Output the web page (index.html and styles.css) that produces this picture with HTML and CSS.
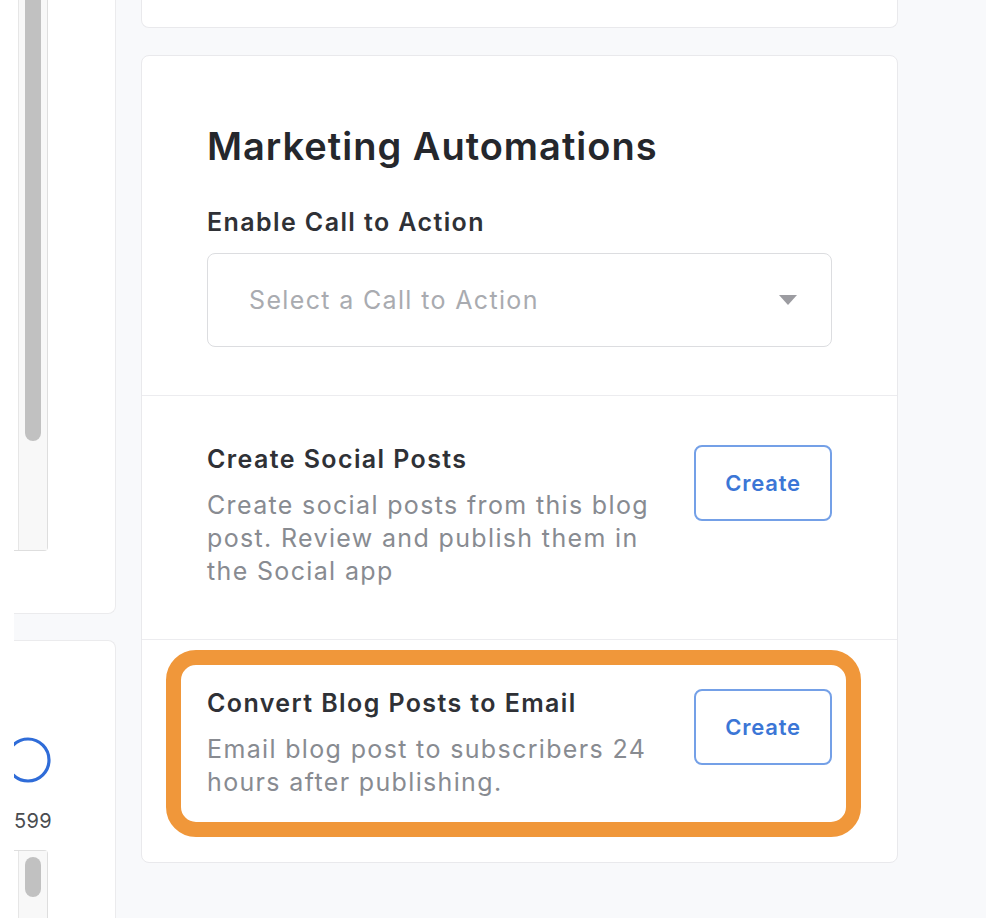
FILE: index.html
```html
<!DOCTYPE html>
<html lang="en">
<head>
<meta charset="utf-8">
<title>Marketing Automations</title>
<link rel="stylesheet" href="styles.css">
</head>
<body>
<div class="page">
  <div class="edge"></div>
  <aside class="left">
    <div class="lcard lcard-top">
      <div class="area area-top">
        <div class="area-text"></div>
        <div class="sb"><div class="thumb thumb-top"></div></div>
      </div>
    </div>
    <div class="lcard lcard-bottom">
      <svg class="ring" width="50" height="50" viewBox="0 0 50 50" aria-hidden="true">
        <circle cx="25" cy="25" r="21" fill="none" stroke="#2f6cd8" stroke-width="3.2"/>
      </svg>
      <div class="count">599</div>
      <div class="area area-bottom">
        <div class="area-text"></div>
        <div class="sb sb-bottom"><div class="thumb thumb-bottom"></div></div>
      </div>
    </div>
  </aside>
  <main class="right">
    <div class="card card-top"></div>
    <div class="card main">
      <section class="sec sec-cta">
        <h2 class="heading">Marketing Automations</h2>
        <div class="label">Enable Call to Action</div>
        <div class="select">
          <span class="placeholder">Select a Call to Action</span>
          <span class="caret"></span>
        </div>
      </section>
      <section class="sec sec-item sec-social">
        <div class="item-text">
          <div class="item-title">Create Social Posts</div>
          <div class="item-desc">Create social posts from this blog post. Review and publish them in the Social app</div>
        </div>
        <button class="btn">Create</button>
      </section>
      <section class="sec sec-item sec-email">
        <div class="item-text">
          <div class="item-title">Convert Blog Posts to Email</div>
          <div class="item-desc">Email blog post to subscribers 24 hours after publishing.</div>
        </div>
        <button class="btn">Create</button>
        <div class="highlight"></div>
      </section>
    </div>
  </main>
</div>
</body>
</html>
```

FILE: styles.css
```css
* { box-sizing: border-box; }

html, body {
  margin: 0;
  padding: 0;
  background: #f8f9fb;
}

body {
  font-family: Inter, "Noto Sans", "Liberation Sans", sans-serif;
  color: #2a2c31;
}

.page {
  display: flex;
  width: 986px;
  height: 918px;
  overflow: hidden;
  background: #f8f9fb;
}

.edge {
  width: 14px;
  flex: none;
  background: #ffffff;
}

/* left column */
.left {
  width: 102px;
  flex: none;
  display: flex;
  flex-direction: column;
  gap: 26px;
}

.lcard {
  background: #ffffff;
  border-right: 1px solid #ebebed;
  overflow: hidden;
}

.lcard-top {
  height: 614px;
  flex: none;
  border-bottom: 1px solid #ebebed;
  border-bottom-right-radius: 8px;
}

.lcard-bottom {
  flex: 1;
  border-top: 1px solid #ebebed;
  border-top-right-radius: 8px;
  display: flex;
  flex-direction: column;
}

.area {
  width: 34px;
  display: flex;
  background: #ffffff;
  border-right: 1px solid #dedede;
}

.area-top {
  height: 551px;
  border-bottom: 1px solid #dedede;
  border-bottom-right-radius: 4px;
}

.area-bottom {
  margin-top: 17px;
  flex: 1;
  border-top: 1px solid #dedede;
  border-top-right-radius: 4px;
}

.area-text {
  width: 4px;
  flex: none;
}

.sb {
  flex: 1;
  background: #f8f8f8;
  border-left: 1.5px solid #e6e6e6;
  padding: 0 5px 0 6px;
}

.thumb {
  width: 16px;
  background: #c1c1c1;
}

.thumb-top {
  height: 441px;
  border-radius: 0 0 8px 8px;
}

.sb-bottom {
  padding-top: 6px;
}

.thumb-bottom {
  height: 40px;
  border-radius: 8px;
}

.ring {
  display: block;
  margin-top: 94px;
  margin-left: -11px;
  flex: none;
}

.count {
  margin-top: 24px;
  font-size: 20px;
  line-height: 24px;
  letter-spacing: 0.3px;
  color: #4a4c50;
  white-space: nowrap;
}

/* right column */
.right {
  width: 757px;
  flex: none;
  margin-left: 25px;
  display: flex;
  flex-direction: column;
  gap: 27px;
}

.card {
  background: #ffffff;
  border: 1px solid #e9e9ec;
  border-radius: 8px;
}

.card-top {
  height: 28px;
  border-top: none;
  border-top-left-radius: 0;
  border-top-right-radius: 0;
}

.main {
  height: 808px;
  display: flex;
  flex-direction: column;
}

.sec {
  padding-left: 65px;
  padding-right: 65px;
}

.sec-cta {
  padding-top: 68px;
  padding-bottom: 48px;
}

.heading {
  margin: 0;
  font-size: 38px;
  line-height: 44px;
  font-weight: 600;
  letter-spacing: 1px;
  color: #25272c;
}

.label {
  margin-top: 39px;
  font-size: 25px;
  line-height: 30px;
  font-weight: 600;
  letter-spacing: 1.4px;
  color: #2f3136;
}

.select {
  margin-top: 16px;
  height: 94px;
  border: 1.5px solid #dcdde0;
  border-radius: 8px;
  display: flex;
  align-items: center;
  justify-content: space-between;
  padding: 0 34px 0 41px;
}

.placeholder {
  font-size: 25px;
  line-height: 30px;
  letter-spacing: 1.35px;
  color: #a9abb0;
}

.caret {
  width: 0;
  height: 0;
  border-left: 9.5px solid transparent;
  border-right: 9.5px solid transparent;
  border-top: 10px solid #9c9ca1;
}

.sec-item {
  border-top: 1px solid #ececef;
  display: flex;
  align-items: flex-start;
  gap: 30px;
  padding-top: 48px;
}

.sec-social {
  padding-bottom: 51px;
}

.sec-email {
  position: relative;
  flex: 1;
}

.item-text {
  flex: 1;
  min-width: 0;
}

.item-title {
  font-size: 25px;
  line-height: 30px;
  font-weight: 600;
  letter-spacing: 1.4px;
  color: #2f3136;
}

.item-desc {
  margin-top: 15px;
  font-size: 25px;
  line-height: 33px;
  letter-spacing: 1.35px;
  color: #888b91;
}

.btn {
  flex: none;
  width: 138px;
  height: 76px;
  margin-top: 1px;
  background: #ffffff;
  border: 2px solid #74a0e7;
  border-radius: 8px;
  font-family: Inter, "Noto Sans", "Liberation Sans", sans-serif;
  font-size: 22px;
  font-weight: 600;
  letter-spacing: 0.8px;
  color: #3b76d6;
  padding: 0;
}

.highlight {
  position: absolute;
  top: 10px;
  left: 24px;
  width: 695px;
  height: 187px;
  border: 15px solid #f0973a;
  border-radius: 30px;
  pointer-events: none;
}
```
